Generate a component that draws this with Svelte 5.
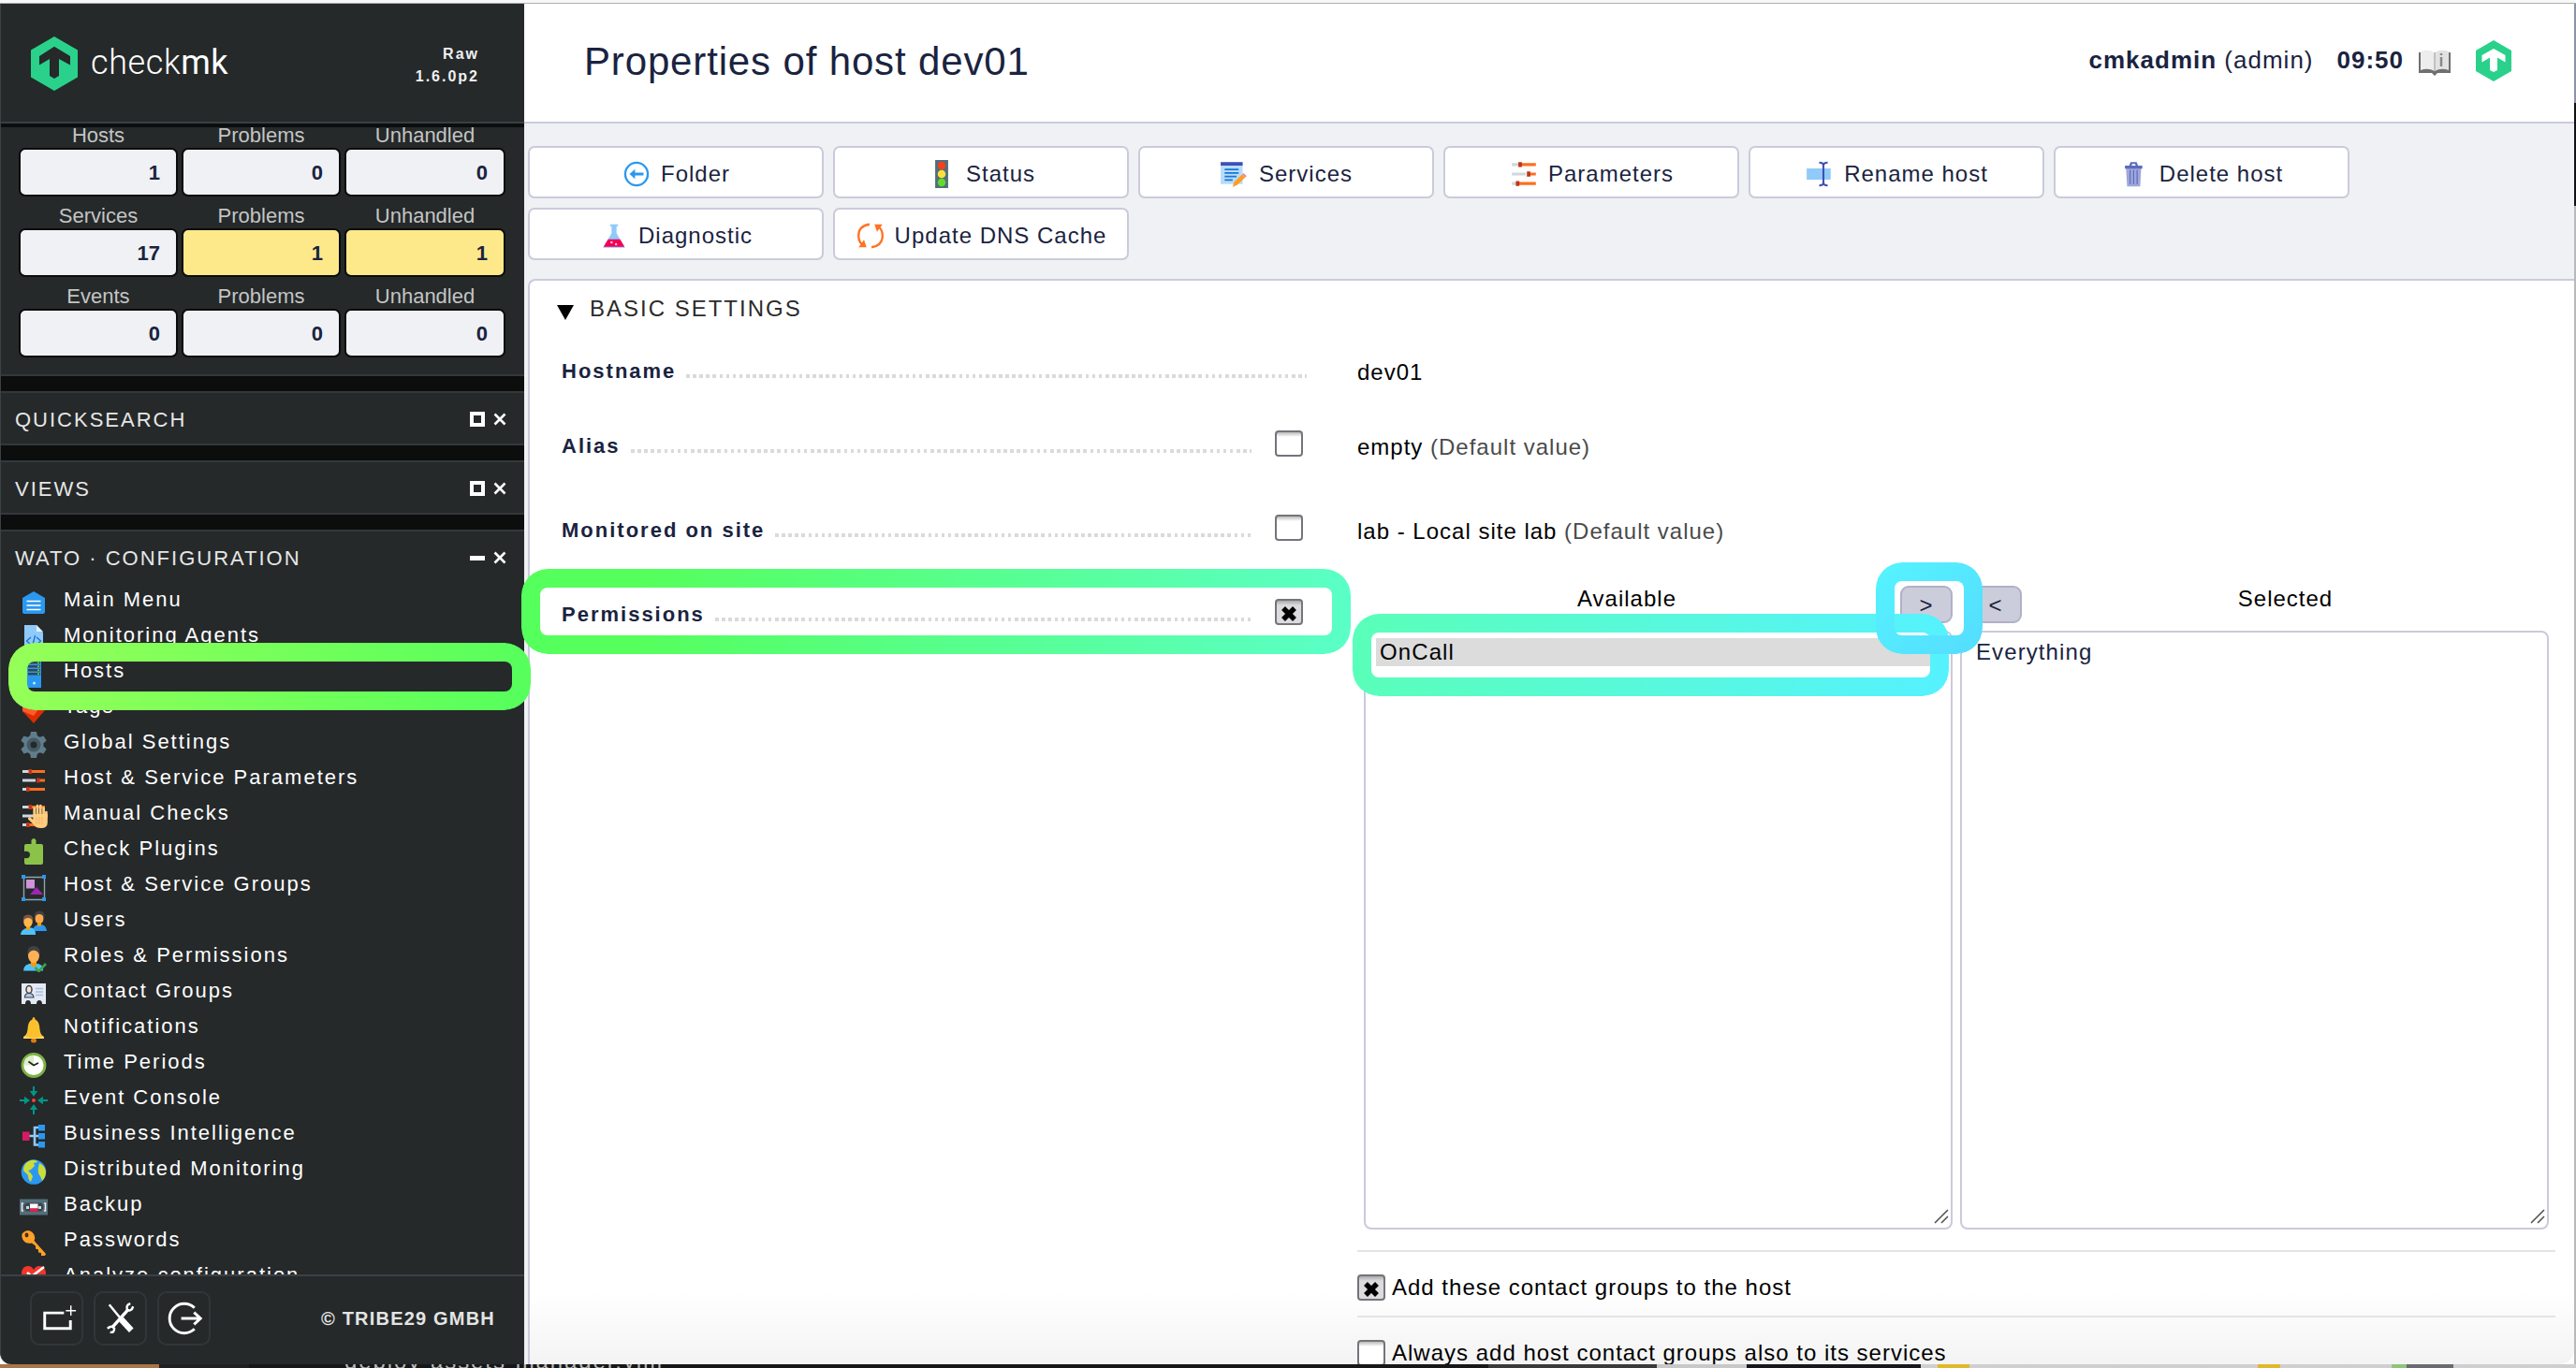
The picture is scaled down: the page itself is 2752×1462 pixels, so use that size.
<script>
  const overview = [
    { labels: ['Hosts', 'Problems', 'Unhandled'], values: ['1', '0', '0'], warn: [false, false, false] },
    { labels: ['Services', 'Problems', 'Unhandled'], values: ['17', '1', '1'], warn: [false, true, true] },
    { labels: ['Events', 'Problems', 'Unhandled'], values: ['0', '0', '0'], warn: [false, false, false] }
  ];
  const menu = [
    ['home', 'Main Menu'],
    ['agents', 'Monitoring Agents'],
    ['host', 'Hosts'],
    ['tag', 'Tags'],
    ['gear', 'Global Settings'],
    ['sliders', 'Host & Service Parameters'],
    ['manual', 'Manual Checks'],
    ['plugin', 'Check Plugins'],
    ['groups', 'Host & Service Groups'],
    ['users', 'Users'],
    ['role', 'Roles & Permissions'],
    ['contact', 'Contact Groups'],
    ['bell', 'Notifications'],
    ['clock', 'Time Periods'],
    ['event', 'Event Console'],
    ['bi', 'Business Intelligence'],
    ['globe', 'Distributed Monitoring'],
    ['backup', 'Backup'],
    ['key', 'Passwords'],
    ['analyze', 'Analyze configuration']
  ];
  const actions = [
    ['back', 'Folder'],
    ['traffic', 'Status'],
    ['services', 'Services'],
    ['sliders', 'Parameters'],
    ['rename', 'Rename host'],
    ['trash', 'Delete host'],
    ['flask', 'Diagnostic'],
    ['refresh', 'Update DNS Cache']
  ];
</script>

{#snippet icon(name)}
  <svg class="icon" viewBox="0 0 30 30" aria-hidden="true">
    {#if name === 'home'}
      <path d="M3 10 15 3 27 10V25q0 2-2 2H5q-2 0-2-2Z" fill="#2b98f0" />
      <path d="M7.500 13.500h15M7.500 18h15M7.500 22.500h15" stroke="#fff" stroke-width="1.300" />
    {:else if name === 'agents'}
      <path d="M5 1h13l7 8v20H5Z" fill="#90caf9" />
      <path d="M18 1v7h7Z" fill="#e1f1fd" />
      <path d="m12 14-4.500 4 4.500 4M18 14l4.500 4-4.500 4M16.500 12l-3 12" stroke="#1976d2" stroke-width="1.400" fill="none" />
    {:else if name === 'host'}
      <path d="M8 1h15v29H8Z" fill="#2b98f0" />
      <path d="M9 2h13v2.500H9zM9 6h13v2.500H9zM9 10h13v2.500H9zM9 14h13v2.500H9z" fill="#37474f" />
      <path d="M19 2.500h2v1.500h-2zM19 6.500h2v1.500h-2zM19 10.500h2v1.500h-2zM19 14.500h2v1.500h-2z" fill="#5fe02a" />
      <circle cx="15.500" cy="25" r="1.500" fill="#cfe8fc" />
    {:else if name === 'tag'}
      <path d="M3 7 9 2h12l6 5v9L15 30 3 17Z" fill="#dd2c00" />
      <path d="M3 7 9 2h12l5 5-11 15L3 17Z" fill="#ff5a2c" />
    {:else if name === 'gear'}
      <g fill="#607d8b">
        <circle cx="15" cy="15" r="10.500" />
        <path d="M12 1h6l1 5h-8zM12 29h6l1-5h-8z" />
        <path d="M12 1h6l1 5h-8zM12 29h6l1-5h-8z" transform="rotate(60 15 15)" />
        <path d="M12 1h6l1 5h-8zM12 29h6l1-5h-8z" transform="rotate(120 15 15)" />
      </g>
      <circle cx="15" cy="15" r="5.500" fill="#25292a" stroke="#455a64" stroke-width="4" />
    {:else if name === 'sliders' || name === 'manual'}
      <path d="M3 5.500h8M3 15h14M3 24.500h5" stroke="#cfd8dc" stroke-width="3" />
      <path d="M11 5.500h16M19 15h8M9 24.500h18" stroke="#ff6d20" stroke-width="3" />
      <path d="M9.500 3h3.500v5H9.500zM18 12.500h3.500v5H18zM7 22h3.500v5H7z" fill="#bf3615" />
      {#if name === 'manual'}
        <path d="M15.700 14V6.500M19 14V4M22.300 14V4M25.600 14V6.500M28.400 16V11" stroke="#ffcc80" stroke-width="2.700" stroke-linecap="round" />
        <path d="M14.300 13h15.500v9q0 6-7 6-6 0-8.500-4.500L9 18.500q-.5-2.500 2-2.500l3.300 3Z" fill="#ffcc80" />
        <path d="M18 16v8M21 16v8M24 16v8" stroke="#f0b060" stroke-width=".8" />
      {/if}
    {:else if name === 'plugin'}
      <path d="M7 7h5.500V3q2.500-4 5 0v4H23q2 0 2 2v18q0 2-2 2H7q-2 0-2-2v-5q6 1 6-3.500T5 15V9q0-2 2-2Z" fill="#8bc34a" />
    {:else if name === 'groups'}
      <path d="M4.500 4.500h22v24h-22Z" fill="none" stroke="#90a4ae" stroke-width="1.400" />
      <path d="M7 7h9v9.500H7Z" fill="#ce93d8" />
      <path d="M11 23 18 15l7 8Z" fill="#9c27b0" />
      <path d="M2 2h4v4H2zM24 2h4v4h-4zM2 26h4v4H2zM24 26h4v4h-4z" fill="#2b98f0" />
    {:else if name === 'users'}
      <path d="M14 24q0-6 7-7t8 7Z" fill="#2b98f0" />
      <ellipse cx="21" cy="10.500" rx="4.500" ry="6" fill="#ffa94d" />
      <path d="M15.800 10q-.8-7.500 5.400-7.500t5.200 7.500q-2-4-5.500-4t-5.100 4Z" fill="#424242" />
      <path d="M19 15h4v3q-2 2-4 0Z" fill="#ff9800" />
      <path d="M1 28q0-6 8-7.500t8 7.500Z" fill="#4fc3f7" />
      <path d="M7 18h4v4q-2 2-4 0Z" fill="#ff9800" />
      <ellipse cx="9" cy="14" rx="4.800" ry="6" fill="#ffb74d" />
      <path d="M3.600 13.500Q3 6.500 9 6.500t5.500 7q-2-3.500-5.500-3.500t-5.400 3.500Z" fill="#795548" />
    {:else if name === 'role'}
      <path d="M4 28.500q0-8 11-8t10 8Z" fill="#4fc3f7" />
      <path d="M12 18h6v5q-3 2.500-6 0Z" fill="#ff9800" />
      <ellipse cx="15" cy="12.500" rx="6" ry="7.500" fill="#ffb255" />
      <path d="M8.500 11.500Q7.500 2 15 2t6.500 9.500Q19 6.500 15 6.500t-6.500 5Z" fill="#424242" />
      <path d="m16.500 25 4 4 7.500-8" stroke="#43a047" stroke-width="2.600" fill="none" />
    {:else if name === 'contact'}
      <path d="M2 4h26v22H2Z" fill="#e4e9f5" />
      <path d="M5.500 19q0-4.500 4.500-4.500t5 4.500Z" fill="#b9c8e6" stroke="#37474f" stroke-width="1.200" />
      <ellipse cx="10" cy="10.500" rx="3" ry="4" fill="#f6e3d0" stroke="#37474f" stroke-width="1.500" />
      <path d="M17 9.500h8M17 13h8M17 16.500h8" stroke="#a9bfe0" stroke-width="1.300" />
      <path d="M6 26q0-4 3-4t3 4M18 26q0-4 3-4t3 4" fill="#25292a" />
    {:else if name === 'bell'}
      <ellipse cx="15" cy="27" rx="3" ry="2.500" fill="#e07b10" />
      <path d="M15 2q1.500 0 1.500 2.500Q21 6 21.500 15q.5 6 4.500 8v2H4v-2q4-2 4.500-8Q9 6 13.500 4.500 13.500 2 15 2Z" fill="#fbc02d" />
      <path d="M5 22.500q10 3.500 20 0l1 2.500H4Z" fill="#ffd968" />
    {:else if name === 'clock'}
      <circle cx="15" cy="15.500" r="12" fill="#fff" stroke="#7cb342" stroke-width="2.800" />
      <path d="M15 15.500H4.500Q5 5 15 4.500Z" fill="#dcedc8" />
      <path d="m9.500 11.500 5.500 4 5-2.500" stroke="#222" stroke-width="1.700" fill="none" />
    {:else if name === 'event'}
      <circle cx="15" cy="15" r="2" fill="#f44336" />
      <g fill="#009688">
        <path d="M14 0h2v5h3.200L15 11l-4.200-6H14Z" />
        <path d="M14 0h2v5h3.200L15 11l-4.200-6H14Z" transform="rotate(90 15 15)" />
        <path d="M14 0h2v5h3.200L15 11l-4.200-6H14Z" transform="rotate(180 15 15)" />
        <path d="M14 0h2v5h3.200L15 11l-4.200-6H14Z" transform="rotate(270 15 15)" />
      </g>
    {:else if name === 'bi'}
      <path d="M8 15h14M21 6h-5v18.500h5" stroke="#90caf9" stroke-width="2.600" fill="none" />
      <path d="M3 10.500h7.500v9.500H3Z" fill="#d81b60" />
      <path d="M20 3h7v6.500h-7zM20 12h7v6.500h-7zM20 21h7v6.500h-7z" fill="#2b98f0" />
    {:else if name === 'globe'}
      <circle cx="15" cy="15.500" r="13.300" fill="#2b98f0" />
      <path d="M12 3q6-1 7 2l-4 1 1 3-4 4-3 1 3 3 2 3-2 6q-3-2-3-7l-5-5q0-6 4-9Z" fill="#cddc39" />
      <path d="M21 6q6 3 7 9 0 6-4 10-1-4-4-8-1-5 1-11Z" fill="#cddc39" />
    {:else if name === 'backup'}
      <path d="M0 6.500h30v17H0Z" fill="#546e7a" />
      <path d="M7 10.500q-5 4.500 0 9h16q5-4.500 0-9Z" fill="#37474f" />
      <path d="M4 11H2.500v8H4M26 11h1.500v8H26" stroke="#eee" stroke-width="1.500" fill="none" />
      <path d="M7 14h3v3H7zM20 14h3v3h-3z" fill="#cfd8dc" />
      <path d="M11 11.500h8.500v5H11Z" fill="#fff" />
      <path d="M11 16.500h8.500v3H11Z" fill="#ff1744" />
    {:else if name === 'key'}
      <path d="M3 5q6-6 11.500 0 3 4 1 8L28 27l-1 2h-4v-3l-3-.500v-3l-3-1v-3l-4-3Q7 17 3.500 12 1.500 8 3 5Z" fill="#ffa028" />
      <ellipse cx="7.500" cy="7" rx="2" ry="2.400" fill="#50300a" />
    {:else if name === 'analyze'}
      <path d="M15 29Q2 18 2 9q1-7 7-7 4 0 6 4 2-4 6-4 6 0 7 7 0 9-13 20Z" fill="#f4362a" />
      <path d="m8 9 5 4L26 3" stroke="#fff" stroke-width="2.600" fill="none" />
    {:else if name === 'back'}
      <circle cx="15" cy="15" r="11.300" fill="none" stroke="#2b98f0" stroke-width="2.200" />
      <path d="m8 15 5.500-5v3.500H22v3h-8.500V20Z" fill="#2b98f0" />
    {:else if name === 'traffic'}
      <path d="M8.500 1h13v28h-13Z" fill="#546e7a" />
      <circle cx="15" cy="6.500" r="4" fill="#f4401c" />
      <circle cx="15" cy="15" r="4" fill="#ffe13a" />
      <circle cx="15" cy="23.500" r="4" fill="#5fdd2a" />
    {:else if name === 'services'}
      <path d="M1 3h22v22H1Z" fill="#b7dcfb" />
      <path d="M1 3h22v3.500H1Z" fill="#3f51b5" />
      <path d="M5 10.500h14M5 14h14M5 17.500h12M5 21h8" stroke="#1976d2" stroke-width="1.600" />
      <path d="m13 28 1.500-5 8-7.500 3 3-8 7.500Z" fill="#ff9d24" />
      <path d="m22.500 15.500 1.500-1.500 3 3-1.500 1.500Z" fill="#e58c92" />
    {:else if name === 'rename'}
      <path d="M2 9.400h24v11.200H2Z" fill="#90caf9" />
      <path d="M14.500 3.500q4.200 0 4.200 3V23.500q0 3-4.200 3M23 3.500q-4.200 0-4.200 3V23.500q0 3 4.200 3" stroke="#3f51b5" stroke-width="1.900" fill="none" />
    {:else if name === 'trash'}
      <path d="M5.800 8h15.400L20 27.500H7Z" fill="#9fa8da" />
      <path d="M4.800 6.500h17.400v3H4.800ZM10.500 3h6l1.500 3.500h-2.500L15 5h-3l-.5 1.500H9Z" fill="#5c6bc0" />
      <path d="M10 11v14M13.500 11v14M17 11v14" stroke="#5c6bc0" stroke-width="1.100" />
    {:else if name === 'flask'}
      <path d="M11 3.500h8v2h-1.500v7L26 27H4l8.500-14.500v-7H11Z" fill="#90caf9" />
      <path d="M9 18.500h12L25.500 26h-21Z" fill="#f50057" />
      <circle cx="12.500" cy="21.500" r="1.200" fill="#ffc1d8" /><circle cx="17" cy="23.500" r="1.200" fill="#ffc1d8" />
    {:else if name === 'refresh'}
      <path d="M14 3.500Q3 5 3 15q0 6 4 9M16 26.500q11-1.500 11-11.500 0-6-4-9" stroke="#ff7325" stroke-width="2.200" fill="none" />
      <path d="M19 3.500h8l-5.500 7.500ZM11 26.500H3l5.500-7.500Z" fill="#ff7325" />
    {/if}
  </svg>
{/snippet}

{#snippet check(on)}
  <span class="check" class:on>
    {#if on}
      <svg viewBox="0 0 18 18"><path d="M3 3 15 15M15 3 3 15" stroke="#000" stroke-width="5.500" /></svg>
    {/if}
  </span>
{/snippet}

{#snippet tools(open)}
  <span class="tools">
    <i class={open ? 'min' : 'max'}></i>
    <svg viewBox="0 0 14 14"><path d="M1.500 1.500 12.500 12.500M12.500 1.500 1.500 12.500" stroke="#fff" stroke-width="2.600" /></svg>
  </span>
{/snippet}

{#snippet grip()}
  <svg viewBox="0 0 16 16"><path d="M1 15 15 1M8 15l7-7" stroke="#555" stroke-width="1.600" /></svg>
{/snippet}

<div class="screen">
  <div class="topline"></div>
  <div class="window">
    <aside>
      <div class="brand">
        <svg class="logo" viewBox="0 0 50 58">
          <path d="M25 0 50 14.500v29L25 58 0 43.500v-29Z" fill="#2ad18b" />
          <path d="M25 10.700 42 21v9.500L30 24v18l-5 3-5-3V24L9 30.500V21Z" fill="#25292a" />
        </svg>
        <span class="name">check<b>mk</b></span>
        <span class="version">Raw<br />1.6.0p2</span>
      </div>
      <div class="snapins">
        <section class="tactical">
          {#each overview as row}
            {#each row.labels as label}<span class="label">{label}</span>{/each}
            {#each row.values as value, i}<span class="value" class:warn={row.warn[i]}>{value}</span>{/each}
          {/each}
        </section>
        <section><h2>QUICKSEARCH{@render tools(false)}</h2></section>
        <section><h2>VIEWS{@render tools(false)}</h2></section>
        <section>
          <h2>WATO · CONFIGURATION{@render tools(true)}</h2>
          <ul>
            {#each menu as [name, label]}
              <li>{@render icon(name)}<span>{label}</span></li>
            {/each}
          </ul>
        </section>
      </div>
      <footer>
        <button aria-label="Add snapin">
          <svg viewBox="0 0 54 54"><path d="M35 21H14v17h28v-9" fill="none" stroke="#fff" stroke-width="3" /><path d="M37 18.500h11M42.500 13v11" stroke="#fff" stroke-width="1.500" /></svg>
        </button>
        <button aria-label="Settings">
          <svg viewBox="0 0 54 54">
            <path d="M15 12 29 29" stroke="#fff" stroke-width="2.500" />
            <path d="m28 28 11 12" stroke="#fff" stroke-width="6.500" />
            <path d="M36 17 18 37" stroke="#fff" stroke-width="3.500" />
            <path d="M38 11q-5 1-3.500 6.500Q39 20 41 14M13 38q5-4 7.500 0 0 5-4.500 4" fill="none" stroke="#fff" stroke-width="2.500" />
          </svg>
        </button>
        <button aria-label="Logout">
          <svg viewBox="0 0 54 54"><path d="M38.500 15.500a16 16 0 1 0 0 23" fill="none" stroke="#fff" stroke-width="3" /><path d="M24 27h20M38 20.500l7 6.500-7 6.500" fill="none" stroke="#fff" stroke-width="3" /></svg>
        </button>
        <span>© TRIBE29 GMBH</span>
      </footer>
    </aside>

    <main>
      <header>
        <h1>Properties of host dev01</h1>
        <div><b>cmkadmin</b> (admin)</div>
        <b class="time">09:50</b>
        <svg class="book" viewBox="0 0 34 28">
          <path d="M0 3h34v22H20l-3 3-3-3H0Z" fill="#6f6f6f" />
          <path d="M2 2q8-3 15 1v20q-7-4-15-1Z" fill="#ededed" />
          <path d="M32 2q-8-3-15 1v20q7-4 15-1Z" fill="#e2e2e2" />
          <path d="M17 3v20" stroke="#999" />
          <path d="M24 4v2M24 8v10" stroke="#888" stroke-width="2.500" />
        </svg>
        <svg class="mini" viewBox="0 0 38 44">
          <path d="M19 0 38 11v22L19 44 0 33V11Z" fill="#2ad18b" />
          <path d="M19 9 31.500 16v7.500L23 18.500V32l-4 2-4-2V18.500L6.500 23.500V16Z" fill="#fff" />
        </svg>
      </header>

      <nav>
        {#each actions as [name, label]}
          <button>{@render icon(name)}{label}</button>
        {/each}
      </nav>

      <div class="panel">
        <h3><svg viewBox="0 0 18 16"><path d="M0 0h18L9 16Z" /></svg>BASIC SETTINGS</h3>
        <div class="row first">
          <div class="legend wide"><b>Hostname</b><i></i></div>
          <div class="content">dev01</div>
        </div>
        <div class="row">
          <div class="legend"><b>Alias</b><i></i>{@render check(false)}</div>
          <div class="content">empty <em>(Default value)</em></div>
        </div>
        <div class="row">
          <div class="legend"><b>Monitored on site</b><i></i>{@render check(false)}</div>
          <div class="content">lab - Local site lab <em>(Default value)</em></div>
        </div>
        <div class="row">
          <div class="legend"><b>Permissions</b><i></i>{@render check(true)}</div>
          <div class="content">
            <div class="heads">
              <span class="available">Available</span>
              <button>&gt;</button><button>&lt;</button>
              <span class="selected">Selected</span>
            </div>
            <div class="lists">
              <div class="list"><span class="option active">OnCall</span>{@render grip()}</div>
              <div class="list"><span class="option">Everything</span>{@render grip()}</div>
            </div>
            <div class="opt">{@render check(true)}Add these contact groups to the host</div>
            <div class="opt">{@render check(false)}Always add host contact groups also to its services</div>
          </div>
        </div>
      </div>
    </main>
    <div class="edge"></div>
  </div>

  <div class="desktop"><span>deploy-assets-manager.yml</span></div>

  <div class="callout hosts"></div>
  <div class="callout permissions"></div>
  <div class="callout oncall"></div>
  <div class="callout move"></div>
</div>

<style>
  :global(body) { background: #fff; }
  .screen {
    position: relative;
    width: 2752px;
    height: 1462px;
    overflow: hidden;
    display: flex;
    flex-direction: column;
    font-family: 'Liberation Sans', Arial, sans-serif;
    font-size: 24px;
    letter-spacing: 1px;
    color: #000;
  }
  .screen :global(*) { box-sizing: border-box; }
  h1, h2, h3, ul { margin: 0; padding: 0; font-weight: 400; list-style: none; }
  button { font: inherit; letter-spacing: inherit; padding: 0; color: #1a2340; }
  .topline { flex: none; height: 4px; background: #f8f8f8; border-bottom: 1px solid #aeaeae; }
  .window { flex: none; display: flex; height: 1454px; }

  aside {
    width: 560px;
    display: flex;
    flex-direction: column;
    background: #25292a;
    border-left: 1px solid #3c4143;
    border-bottom-left-radius: 12px;
    overflow: hidden;
  }
  .brand {
    flex: none;
    height: 128px;
    display: flex;
    padding: 35px 48px 0 32px;
    border-bottom: 2px solid #393f46;
    color: #fff;
  }
  .logo { width: 50px; height: 58px; }
  .name { margin-left: 14px; font: 300 36px/57px Roboto, sans-serif; letter-spacing: 0.6px; }
  .name b { font-weight: 400; }
  .version {
    margin: 7px 0 0 auto;
    text-align: right;
    font-weight: 700;
    font-size: 16px;
    line-height: 24px;
    letter-spacing: 2px;
    color: #f0f0f0;
  }
  .snapins { flex: none; height: 1230px; overflow: hidden; background: #0c0e0d; padding-top: 4px; display: flex; flex-direction: column; gap: 16px; }
  section { flex: none; background: #25292a; border: 2px solid #33383b; border-width: 2px 0; color: #e6e6e6; font-size: 22px; }
  .tactical {
    height: 266px;
    border-top: 0;
    overflow: hidden;
    display: grid;
    grid-template-columns: 170px 170px 172px;
    grid-template-rows: 22px repeat(5, 52px 34px);
    column-gap: 4px;
    padding-left: 19px;
    letter-spacing: 0;
    color: #c4c4c4;
  }
  .label { align-self: end; text-align: center; line-height: 27px; }
  .value {
    height: 52px;
    border: 2px solid #0b0c0c;
    border-radius: 7px;
    background: #f0f1f4;
    color: #1a2340;
    font-weight: 700;
    line-height: 50px;
    text-align: right;
    padding-right: 17px;
  }
  .warn { background: #fee98a; }
  h2 { display: flex; justify-content: space-between; font-size: 22px; line-height: 54px; height: 54px; padding: 2px 19px 0 15px; letter-spacing: 2px; }
  .tools { display: flex; align-items: center; gap: 9px; height: 52px; }
  .tools svg { width: 14px; height: 14px; }
  .max { width: 16px; height: 16px; border: 4px solid #fff; }
  .min { width: 16px; height: 5px; background: #fff; }
  li { display: flex; align-items: center; height: 38px; padding-left: 20px; color: #fff; letter-spacing: 2px; line-height: 38px; }
  li span { margin-left: 17px; white-space: nowrap; }
  .icon { flex: none; width: 30px; height: 30px; }
  li :global(.icon) { margin-top: 6px; }
  footer { flex: 1; display: flex; gap: 11px; padding: 16px 31px 0 31px; border-top: 2px solid #3b4047; font-size: 20px; }
  footer button { width: 57px; height: 58px; border: 2px solid #313638; border-radius: 10px; background: none; }
  footer button svg { display: block; width: 53px; height: 54px; }
  footer span { margin-left: auto; line-height: 58px; font-weight: 700; letter-spacing: 1.2px; color: #e4e4e4; }

  main {
    flex: 1;
    min-width: 0;
    display: flex;
    flex-direction: column;
    background: #f0f1f4;
    overflow: hidden;
    border-bottom-right-radius: 16px;
  }
  header {
    flex: none;
    height: 128px;
    display: flex;
    background: #fff;
    border-bottom: 2px solid #cbcadc;
    padding: 0 67px 0 64px;
    color: #1a2340;
    font-size: 26px;
    line-height: 120px;
  }
  h1 { font-size: 42px; line-height: 124px; letter-spacing: 0.85px; flex: 1; }
  .time { margin-left: 25px; }
  .book { width: 34px; height: 28px; margin: 49px 0 0 16px; }
  .mini { width: 38px; height: 44px; margin: 39px 0 0 27px; }
  nav { display: grid; grid-template-columns: repeat(6, 316px); gap: 10px; padding: 24px 4px 20px; }
  nav button {
    display: flex;
    align-items: center;
    justify-content: center;
    gap: 10px;
    height: 56px;
    background: #fff;
    border: 2px solid #cbcadc;
    border-radius: 7px;
    padding-top: 3px;
  }
  nav .icon { width: 32px; height: 32px; }
  .panel {
    flex: 1;
    margin-left: 4px;
    border: 2px solid #cbcadc;
    border-width: 2px 0 0 2px;
    border-top-left-radius: 8px;
    background: linear-gradient(#fff 1080px, #f3f3f3 1160px);
    padding: 0 20px 0 29px;
    overflow: hidden;
  }
  h3 { display: flex; align-items: center; height: 59px; font-size: 24px; line-height: 59px; color: #2b2b2b; letter-spacing: 2px; }
  h3 svg { width: 18px; height: 16px; margin: 8px 17px 0 0; fill: #000; }
  .row { display: flex; height: 90px; }
  .row.first { height: 80px; margin-top: 11px; }
  .legend { flex: none; width: 801px; height: 50px; display: flex; margin-right: 54px; padding: 0 4px 0 5px; color: #1a2340; font-size: 22px; line-height: 53px; }
  .legend.wide { padding-right: 0; }
  .legend b { letter-spacing: 2px; }
  .legend i {
    flex: 1;
    height: 4px;
    margin: 30px 25px 0 11px;
    background: repeating-linear-gradient(90deg, #dadada 0 3.600px, transparent 3.600px 7.110px);
  }
  .legend.wide i { margin-right: 0; }
  .legend :global(.check) { margin-top: 10px; }
  .check {
    flex: none;
    width: 30px;
    height: 28px;
    display: flex;
    border: 2px solid #72757a;
    border-radius: 4px;
    background: linear-gradient(#bbb, #fff 5px);
  }
  .check.on { background: linear-gradient(#aaa, #dcdcdf 5px); }
  .check svg { width: 18px; height: 18px; margin: 5px 0 0 4px; }
  .content { flex: 1; line-height: 56px; white-space: nowrap; }
  em { font-style: normal; color: #4a4a4a; }
  .heads { display: flex; height: 42px; margin-top: -4px; }
  .heads span { text-align: center; line-height: 28px; }
  .available { width: 580px; padding-right: 4px; }
  .selected { width: 527px; }
  .heads button {
    width: 56px;
    height: 40px;
    margin-right: 18px;
    border: 2px solid #b0b0c8;
    border-radius: 9px;
    background: #cbcddb;
    line-height: 34px;
    padding-top: 2px;
  }
  .lists { display: flex; gap: 8px; margin: 6px 0 22px 7px; }
  .list { flex: none; width: 629px; height: 640px; border: 2px solid #cbcadc; border-radius: 8px; padding: 6px 10px 4px 11px; display: flex; flex-direction: column; color: #1a2340; }
  .option { height: 30px; line-height: 29px; padding-left: 4px; letter-spacing: 1.100px; }
  .active { background: #dcdcdc; color: #000; }
  .list svg { width: 16px; height: 16px; margin: auto -8px 0 auto; }
  .opt { display: flex; height: 70px; border-top: 2px solid #e3e4e5; padding-top: 24px; line-height: 27px; }
  .opt :global(.check) { margin-right: 7px; }
  .edge { flex: none; width: 2px; background: linear-gradient(#8b93a4 0 106px, #111 106px 216px, #b9b9bc 216px); }

  .desktop {
    flex: none;
    height: 4px;
    overflow: hidden;
    color: #b8b8b8;
    background: linear-gradient(90deg, #a87548 170px, #202022 170px 266px, #17171a 266px 1590px, #3a3a3d 1590px 1770px, #c8c8cb 1770px 1866px, #17171d 1866px 2052px, #cfcfd2 2052px 2070px, #e0b92c 2070px 2104px, #cfcfd2 2104px 2412px, #e0b92c 2412px 2436px, #cfcfd2 2436px 2555px, #8fc47b 2555px 2571px, #6a6a70 2571px 2621px, #cfcfd2 2621px);
  }
  .desktop span { display: block; margin: -17px 0 0 368px; line-height: 27px; letter-spacing: 1.900px; }

  /* Highlight frames drawn over the page: a gradient ring, hollow inside */
  .callout {
    position: absolute;
    border: 20px solid transparent;
    border-radius: 28px;
    background: var(--paint) border-box;
    mask: linear-gradient(#000 0 0) padding-box exclude, linear-gradient(#000 0 0) border-box;
  }
  .hosts { left: 9px; top: 687px; width: 558px; height: 72px; --paint: linear-gradient(100deg, #96ff58, #55ff5c); }
  .permissions { left: 557px; top: 608px; width: 886px; height: 91px; --paint: linear-gradient(98deg, #55ff5c 15%, #5affc8); }
  .oncall { left: 1445px; top: 656px; width: 637px; height: 88px; --paint: linear-gradient(98deg, #5affb8, #55f2ff); }
  .move { left: 2004px; top: 601px; width: 114px; height: 98px; --paint: linear-gradient(135deg, #55f4ff, #55dcff); }
</style>
